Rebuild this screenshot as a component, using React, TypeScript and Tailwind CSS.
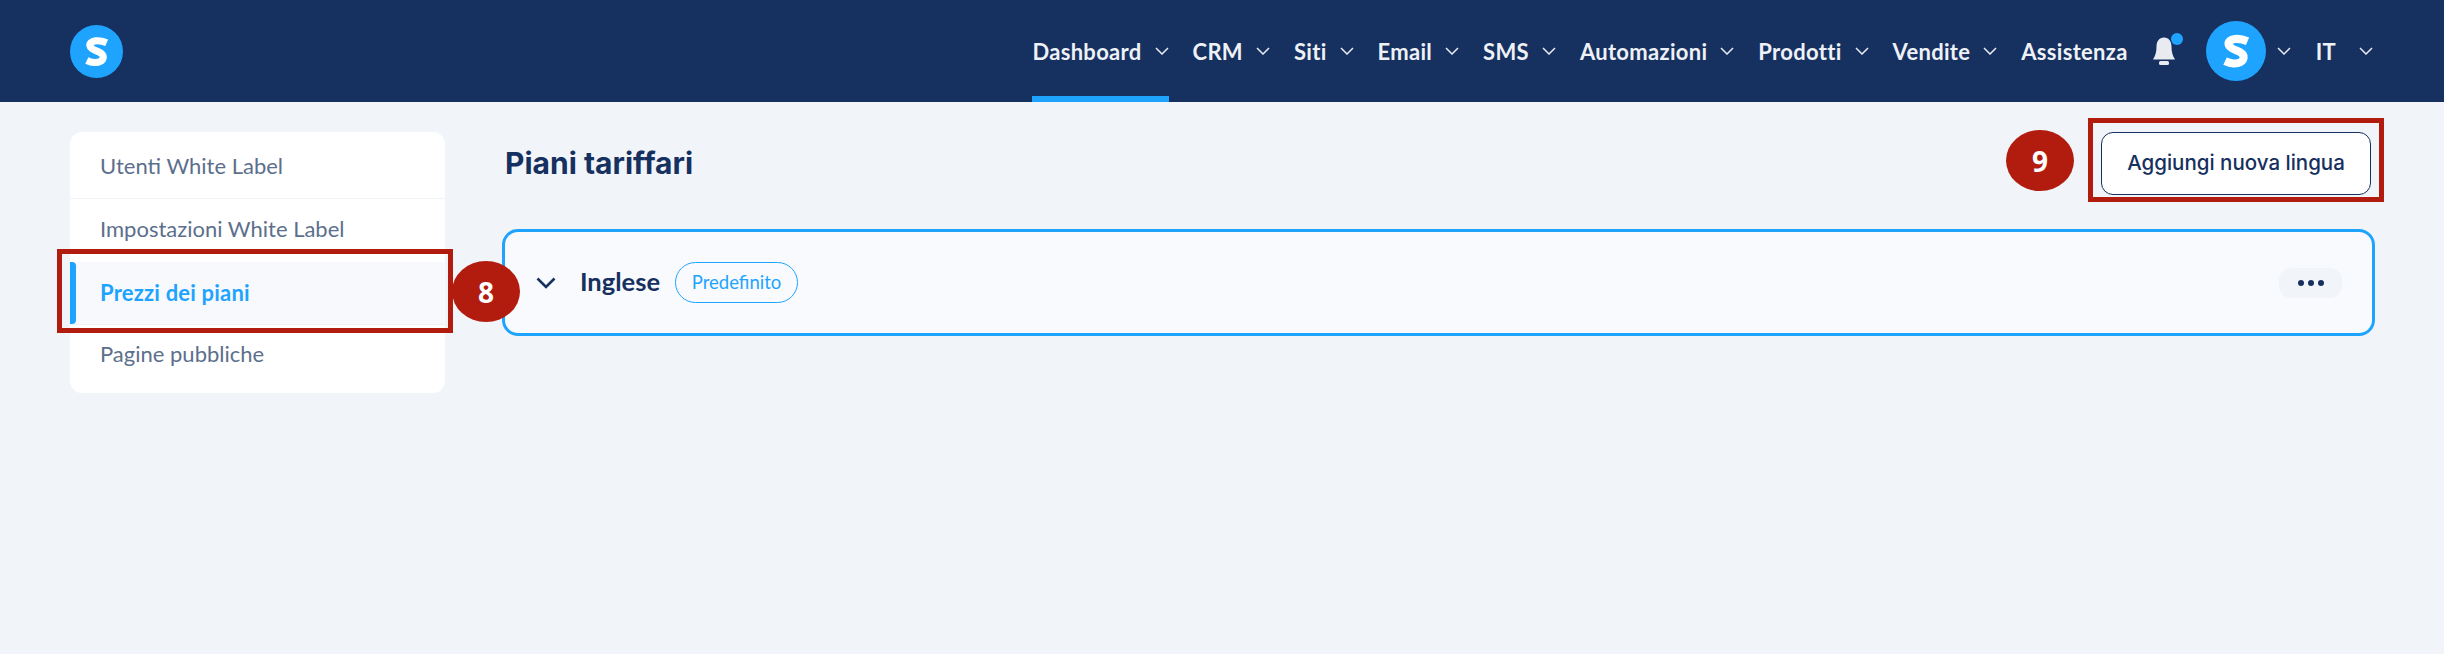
const navItems = [
    { label: "Dashboard", arrow: true },
    { label: "CRM", arrow: true },
    { label: "Siti", arrow: true },
    { label: "Email", arrow: true },
    { label: "SMS", arrow: true },
    { label: "Automazioni", arrow: true },
    { label: "Prodotti", arrow: true },
    { label: "Vendite", arrow: true },
    { label: "Assistenza", arrow: false },
]

const Logo = ({ size }: { size: string }) => (
    <svg viewBox="0 0 52 52" className={size}>
        <ellipse cx="26" cy="26" rx="26" ry="26" fill="#1ea4ff" />
        <path
            d="M36 17.5C32 15.8 28 15.2 25 15.6C21 16.2 19 18 19.6 20.5C20.2 23 23 24.3 26.5 25.6C30.5 27.1 33 29 32.6 32C32 35.4 28.5 37 24 36.8C21.5 36.7 19 36 16.5 34.8"
            fill="none"
            stroke="#fff"
            strokeWidth="7"
        />
    </svg>
)

const Arrow = () => (
    <svg viewBox="0 0 14 8" className="w-[14px] h-[8px] shrink-0 text-[#e8edf5]">
        <path d="M1 1L7 7L13 1" fill="none" stroke="currentColor" strokeWidth="1.5" />
    </svg>
)

export default function App() {
    return (
        <div className="relative min-h-[654px] bg-[#f1f4f9] font-['Lato',sans-serif]">
            <header className="h-[102px] bg-[#163060] flex items-center justify-between pl-[70px] pr-[71px]">
                <Logo size="w-[53px] h-[53px]" />
                <nav className="flex items-center h-full text-[22px] tracking-[0.3px] font-bold text-[#eef1f6]">
                    {navItems.map((item, i) => (
                        <div key={item.label} className="relative h-full flex items-center gap-[13px] mr-[24px]">
                            {item.label}
                            {item.arrow && <Arrow />}
                            {i === 0 && <span className="absolute left-0 right-0 bottom-0 h-[6px] bg-[#1ea4ff]" />}
                        </div>
                    ))}
                    <div className="relative mr-[30px]">
                        <svg viewBox="0 0 24 30" className="w-[24px] h-[30px]">
                            <path d="M12 1.5C7 1.5 4.5 5.5 4.5 10.5C4.5 16 3.5 19.5 1 23.5H23C20.5 19.5 19.5 16 19.5 10.5C19.5 5.5 17 1.5 12 1.5Z" fill="#e8ebef" />
                            <rect x="7" y="25" width="10" height="4" rx="1.5" fill="#e8ebef" />
                        </svg>
                        <span className="absolute -top-[3px] -right-[7px] w-[12px] h-[12px] rounded-full bg-[#1ea4ff]" />
                    </div>
                    <Logo size="w-[60px] h-[60px]" />
                    <div className="ml-[11px] mr-[25px]"><Arrow /></div>
                    <div className="flex items-center gap-[23px]">
                        IT
                        <Arrow />
                    </div>
                </nav>
            </header>

            <div className="flex pl-[70px] pr-[69px] pt-[30px] gap-[57px]">
                <aside className="w-[375px] h-[261px] shrink-0 bg-white rounded-[12px] text-[22px] text-[#5c6f8c]">
                    <div className="h-[67px] pl-[30px] flex items-center border-b border-[#f1f4f9]">Utenti White Label</div>
                    <div className="h-[63px] pl-[30px] pb-[5px] flex items-center">Impostazioni White Label</div>
                    <div className="relative h-[63px] pl-[30px] pb-[2px] flex items-center bg-[#f8f9fc] border-b border-[#eef1f6] font-bold tracking-[0.2px] text-[#1ea4ff]">
                        <span className="absolute left-0 top-0 bottom-0 w-[6px] rounded-r-[4px] bg-[#1ea4ff]" />
                        Prezzi dei piani
                    </div>
                    <div className="h-[68px] pl-[30px] pb-[12px] flex items-center">Pagine pubbliche</div>
                </aside>

                <main className="flex-1">
                    <div className="flex items-center justify-between h-[62px] pl-[3px] pr-[4px]">
                        <h1 className="font-['Inter',sans-serif] text-[30px] font-bold text-[#163060]">Piani tariffari</h1>
                        <button className="w-[270px] h-[63px] bg-white border border-[#163060] rounded-[12px] font-['Inter',sans-serif] text-[20.5px] font-medium text-[#163060]">
                            Aggiungi nuova lingua
                        </button>
                    </div>
                    <div className="mt-[35px] h-[107px] flex items-center pl-[31px] pr-[30px] bg-[#f9fafd] border-[3px] border-[#1ea4ff] rounded-[16px]">
                        <svg viewBox="0 0 20 12" className="w-[20px] h-[12px] text-[#163060]">
                            <path d="M1.5 1.5L10 10L18.5 1.5" fill="none" stroke="currentColor" strokeWidth="2.6" />
                        </svg>
                        <span className="ml-[24px] pb-[2px] text-[25.5px] font-bold text-[#163060]">Inglese</span>
                        <span className="ml-[15px] h-[41px] w-[123px] flex items-center justify-center rounded-full border border-[#1ea4ff] text-[18.5px] text-[#1ea4ff]">
                            Predefinito
                        </span>
                        <button className="ml-auto w-[63px] h-[30px] flex items-center justify-center gap-[4px] rounded-[12px] bg-[#f1f4f9]">
                            <span className="w-[6px] h-[6px] rounded-full bg-[#163060]" />
                            <span className="w-[6px] h-[6px] rounded-full bg-[#163060]" />
                            <span className="w-[6px] h-[6px] rounded-full bg-[#163060]" />
                        </button>
                    </div>
                </main>
            </div>

            {/* annotations on top of the screenshot */}
            <div className="absolute left-[57px] top-[249px] w-[396px] h-[84px] border-[5px] border-[#b21c0e]" />
            <div className="absolute left-[452px] top-[261px] w-[68px] h-[61px] rounded-[50%] bg-[#b21c0e] flex items-center justify-center font-['Open_Sans',sans-serif] text-[28px] font-bold text-white">8</div>
            <div className="absolute left-[2088px] top-[118px] w-[296px] h-[84px] border-[5px] border-[#b21c0e]" />
            <div className="absolute left-[2006px] top-[130px] w-[68px] h-[61px] rounded-[50%] bg-[#b21c0e] flex items-center justify-center font-['Open_Sans',sans-serif] text-[28px] font-bold text-white">9</div>
        </div>
    )
}
